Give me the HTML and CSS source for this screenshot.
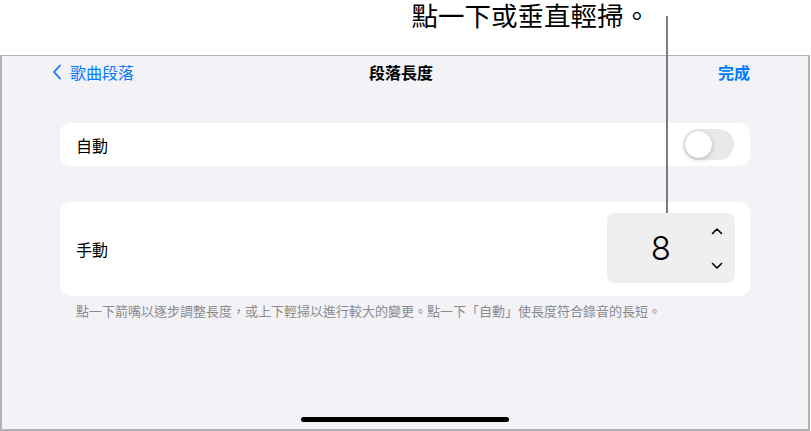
FILE: index.html
```html
<!DOCTYPE html>
<html lang="zh-Hant">
<head>
    <meta charset="UTF-8">
    <meta name="viewport" content="width=device-width, initial-scale=1.0">
    <title>段落長度</title>
    <link rel="stylesheet" href="styles.css">
</head>
<body>

    <div class="callout">
        <span class="callout-text">點一下或垂直輕掃。</span>
        <div class="callout-line"></div>
    </div>

    <div class="screen">
        <div class="nav">
            <a class="nav-back">
                <svg width="10" height="16" viewBox="0 0 10 16"><path d="M8 1.5 L2 8 L8 14.5" fill="none" stroke="#007aff" stroke-width="1.8" stroke-linecap="round" stroke-linejoin="round"/></svg>
                <span>歌曲段落</span>
            </a>
            <div class="nav-title">段落長度</div>
            <a class="nav-done">完成</a>
        </div>

        <div class="card card-auto">
            <span class="label">自動</span>
            <div class="toggle"><div class="knob"></div></div>
        </div>

        <div class="card card-manual">
            <span class="label">手動</span>
            <div class="stepper">
                <span class="value">8</span>
                <div class="arrows">
                    <svg width="12" height="8" viewBox="0 0 12 8"><path d="M1.5 6.5 L6 2 L10.5 6.5" fill="none" stroke="#000" stroke-width="1.6" stroke-linecap="round" stroke-linejoin="round"/></svg>
                    <svg width="12" height="8" viewBox="0 0 12 8"><path d="M1.5 1.5 L6 6 L10.5 1.5" fill="none" stroke="#000" stroke-width="1.6" stroke-linecap="round" stroke-linejoin="round"/></svg>
                </div>
            </div>
        </div>

        <p class="note">點一下箭嘴以逐步調整長度，或上下輕掃以進行較大的變更。點一下「自動」使長度符合錄音的長短。</p>

        <div class="home-bar"></div>
    </div>

</body>
</html>
```

FILE: styles.css
```css
body {
    margin: 0;
    width: 811px;
    height: 431px;
    overflow: hidden;
    background-color: #fff;
    font-family: "Noto Sans CJK TC", "Noto Sans", sans-serif;
    color: #000;
}
.callout {
    position: relative;
    height: 55px;
    display: flex;
    justify-content: flex-end;
    padding-right: 161px;
}
.callout-text {
    font-size: 26.5px;
    line-height: 30px;
}
.callout-line {
    position: absolute;
    left: 666px;
    top: 16px;
    width: 2px;
    height: 197px;
    background-color: #7d7d7d;
    z-index: 2;
}
.screen {
    box-sizing: border-box;
    width: 810px;
    height: 376px;
    border: 2px solid #b2b2b4;
    border-top-width: 1.5px;
    background-color: #f2f2f7;
    display: flex;
    flex-direction: column;
    align-items: center;
}
.nav {
    width: 100%;
    box-sizing: border-box;
    height: 31px;
    padding: 0 58px 0 50px;
    display: grid;
    grid-template-columns: 1fr auto 1fr;
    align-items: center;
    font-size: 16px;
}
.nav-back {
    display: flex;
    align-items: center;
    gap: 8px;
    color: #007aff;
}
.nav-title {
    font-weight: 700;
}
.nav-done {
    justify-self: end;
    color: #007aff;
    font-weight: 700;
}
.card {
    box-sizing: border-box;
    width: 690px;
    background-color: #fff;
    border-radius: 10px;
    display: flex;
    align-items: center;
    justify-content: space-between;
    padding: 0 16px;
}
.label {
    font-size: 16px;
}
.card-auto {
    height: 43px;
    margin-top: 36px;
}
.card-manual {
    height: 94px;
    margin-top: 36px;
    padding-right: 15px;
}
.toggle {
    width: 51px;
    height: 31px;
    border-radius: 16px;
    background-color: #e9e9eb;
    position: relative;
}
.knob {
    position: absolute;
    left: 2px;
    top: 2px;
    width: 27px;
    height: 27px;
    border-radius: 50%;
    background-color: #fff;
    box-shadow: 0 2px 5px rgba(0,0,0,0.18), 0 0 1px rgba(0,0,0,0.2);
}
.stepper {
    width: 128px;
    height: 70px;
    margin-top: -2px;
    border-radius: 8px;
    background-color: #efeff0;
    display: flex;
    align-items: center;
    justify-content: flex-end;
    padding-right: 12px;
    box-sizing: border-box;
}
.value {
    font-family: Inter, Roboto, sans-serif;
    font-weight: 300;
    font-size: 33px;
    margin-right: 40px;
}
.arrows {
    display: flex;
    flex-direction: column;
    gap: 27px;
}
.note {
    width: 690px;
    box-sizing: border-box;
    padding-left: 16px;
    margin: 6px 0 0 0;
    font-size: 13px;
    color: #8a8a8e;
    line-height: 18px;
}
.home-bar {
    margin-top: auto;
    margin-bottom: 7px;
    width: 208px;
    height: 5px;
    border-radius: 3px;
    background-color: #000;
}
```
